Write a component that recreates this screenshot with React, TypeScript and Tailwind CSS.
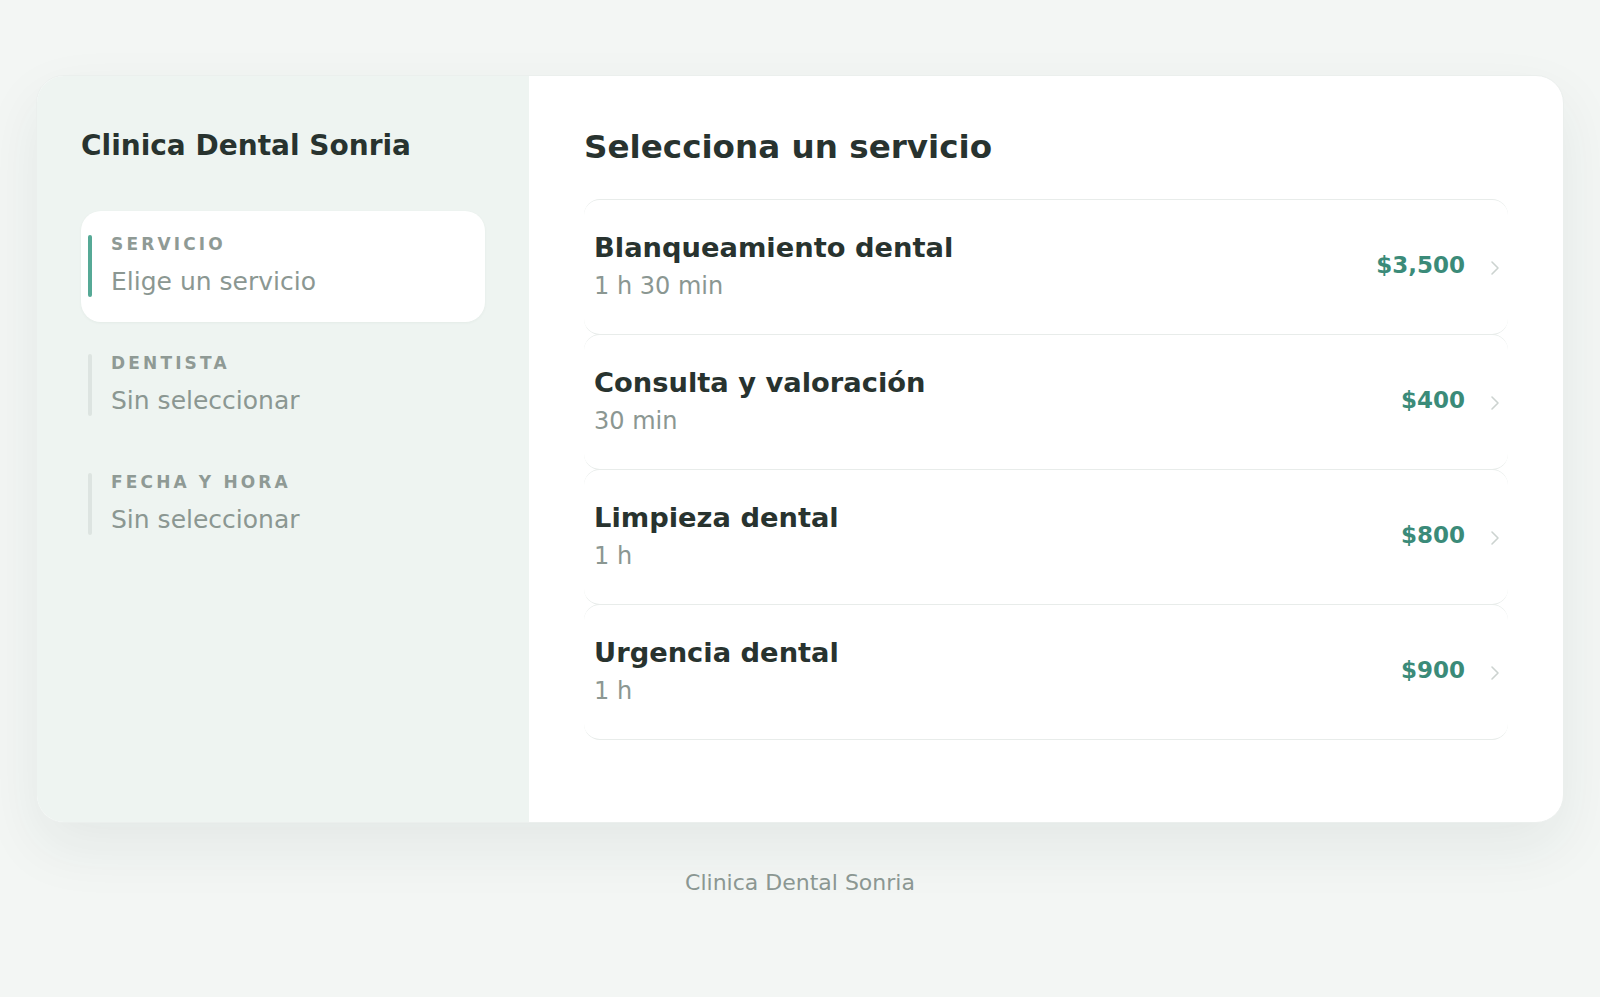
import React, { FC } from 'react'

interface Service {
  name: string
  duration: string
  price: string
}

interface Step {
  label: string
  value: string
  active?: boolean
}

const services: Service[] = [
  { name: 'Blanqueamiento dental', duration: '1 h 30 min', price: '$3,500' },
  { name: 'Consulta y valoración', duration: '30 min', price: '$400' },
  { name: 'Limpieza dental', duration: '1 h', price: '$800' },
  { name: 'Urgencia dental', duration: '1 h', price: '$900' },
]

const steps: Step[] = [
  { label: 'Servicio', value: 'Elige un servicio', active: true },
  { label: 'Dentista', value: 'Sin seleccionar' },
  { label: 'Fecha y hora', value: 'Sin seleccionar' },
]

const StepItem: FC<{ step: Step }> = ({ step }) => {
  return (
    <div
      className={`h-[111px] rounded-[20px] px-[7px] pt-[23px] ${
        step.active ? 'bg-white shadow-[0_1px_3px_rgba(40,70,60,0.05)]' : ''
      }`}
    >
      <div className="flex items-stretch">
        <span
          className={`mt-px w-1 shrink-0 rounded-full ${step.active ? 'bg-[#56a996]' : 'bg-[#dde4e1]'}`}
        />
        <div className="flex flex-col pl-[19px]">
          <span className="text-[17px] font-bold uppercase leading-[20px] tracking-[0.185em] text-[#8f9a95]">
            {step.label}
          </span>
          <span className="mt-[13px] text-[25px] leading-[30px] text-[#8b9792]">{step.value}</span>
        </div>
      </div>
    </div>
  )
}

const ServiceRow: FC<{ service: Service }> = ({ service }) => {
  return (
    <div className="-mt-px flex h-[136px] items-center rounded-2xl border-y border-[#e8ecea] pl-[10px] pr-[8px] first:mt-0">
      <div className="flex flex-1 flex-col pb-[3px]">
        <span className="text-[27.3px] font-bold leading-[34px] text-[#28332f]">{service.name}</span>
        <span className="mt-[6px] text-[24px] leading-[30px] text-[#8b9792]">{service.duration}</span>
      </div>
      <span className="mb-[5px] text-[23px] font-bold leading-[30px] text-[#3b8b79]">{service.price}</span>
      <svg className="ml-[25px] mt-[2px]" width="10" height="16" viewBox="0 0 10 16" fill="none">
        <polyline points="2,2 8,8 2,14" stroke="#ccd3d0" strokeWidth="1.6" strokeLinecap="round" strokeLinejoin="round" />
      </svg>
    </div>
  )
}

const App: FC = () => {
  return (
    <div className="min-h-screen bg-[#f3f6f4] px-9 pt-[75px] font-['DejaVu_Sans',sans-serif]">
      <div className="flex h-[748px] overflow-hidden rounded-[28px] border border-[#ebefed] bg-white shadow-[0_24px_60px_rgba(30,60,50,0.07)]">
        <aside className="w-[492px] shrink-0 bg-[#eef4f1] px-[44px] pt-[53px]">
          <h1 className="text-[28px] font-bold leading-[34px] text-[#28332f]">Clinica Dental Sonria</h1>
          <div className="mt-[48px] flex flex-col gap-2">
            {steps.map((step) => (
              <StepItem key={step.label} step={step} />
            ))}
          </div>
        </aside>
        <main className="flex-1 px-[55px] pt-[51px]">
          <h2 className="text-[32.6px] font-bold leading-[40px] text-[#28332f]">Selecciona un servicio</h2>
          <div className="mt-[32px] flex flex-col">
            {services.map((service) => (
              <ServiceRow key={service.name} service={service} />
            ))}
          </div>
        </main>
      </div>
      <p className="mt-[45px] text-center text-[22px] leading-[30px] text-[#8b9792]">Clinica Dental Sonria</p>
    </div>
  )
}

export default App
